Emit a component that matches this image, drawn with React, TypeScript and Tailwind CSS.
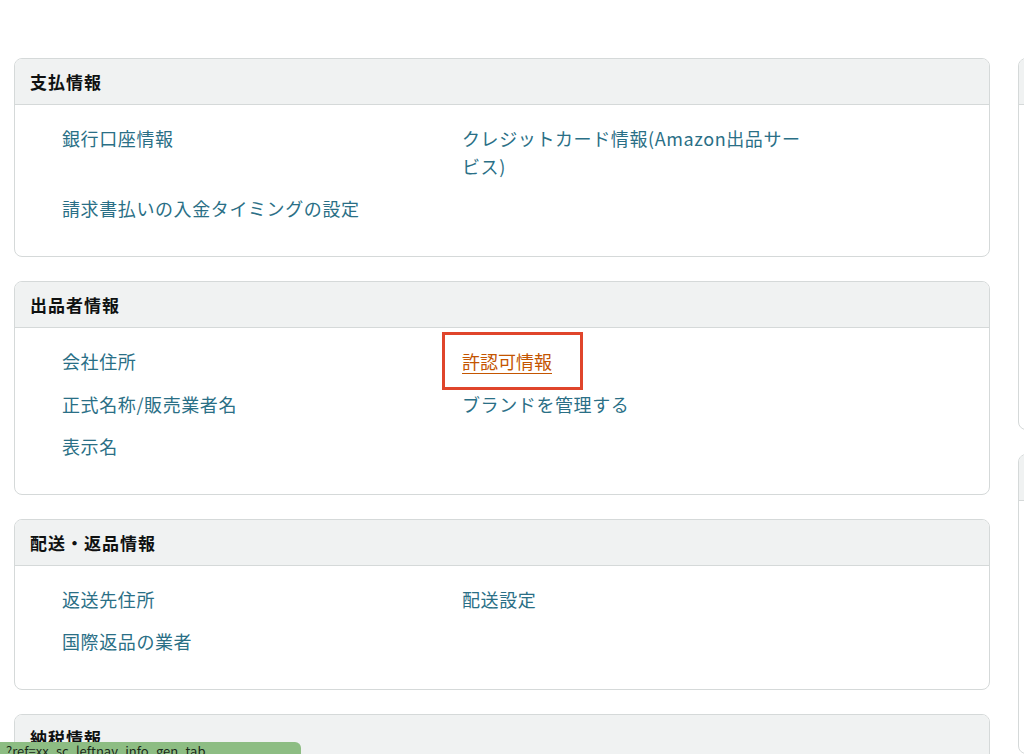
const font = { fontFamily: '"Noto Sans CJK JP", "Noto Sans", sans-serif' };

type Item = { label: string; highlight?: boolean };

const sections: { title: string; rows: [Item | null, Item | null][] }[] = [
  {
    title: "支払情報",
    rows: [
      [{ label: "銀行口座情報" }, { label: "クレジットカード情報(Amazon出品サービス)" }],
      [{ label: "請求書払いの入金タイミングの設定" }, null],
    ],
  },
  {
    title: "出品者情報",
    rows: [
      [{ label: "会社住所" }, { label: "許認可情報", highlight: true }],
      [{ label: "正式名称/販売業者名" }, { label: "ブランドを管理する" }],
      [{ label: "表示名" }, null],
    ],
  },
  {
    title: "配送・返品情報",
    rows: [
      [{ label: "返送先住所" }, { label: "配送設定" }],
      [{ label: "国際返品の業者" }, null],
    ],
  },
];

const Link = ({ item }: { item: Item | null }) => {
  if (!item) return <div />;
  return item.highlight ? (
    <div className="relative mb-[14px] leading-[28px]">
      <span className="text-[18px] text-[#c45500] underline underline-offset-4">{item.label}</span>
      <span className="absolute left-[-20px] top-[-15px] h-[58px] w-[141px] border-[3px] border-[#e0452b]" />
    </div>
  ) : (
    <div className="mb-[14px] text-[18px] leading-[28px] tracking-[0.6px] text-[#2a6f86]">{item.label}</div>
  );
};

const Card = ({ title, rows }: (typeof sections)[number]) => (
  <div className="mb-[24px] overflow-hidden rounded-[8px] border border-[#d5d9d9]">
    <div className="flex h-[46px] items-center border-b border-[#d5d9d9] bg-[#f0f2f2] px-[15px] text-[17px] font-bold tracking-[1px] text-[#0f1111]">
      {title}
    </div>
    <div className="grid grid-cols-[400px_345px] px-[47px] pb-[20px] pt-[19px]">
      {rows.map(([l, r], i) => [<Link key={`l${i}`} item={l} />, <Link key={`r${i}`} item={r} />])}
    </div>
  </div>
);

export default function App() {
  return (
    <div className="relative h-[754px] w-[1024px] overflow-hidden bg-white" style={font}>
      <div className="flex gap-[28px] pl-[14px] pt-[58px]">
        <div className="w-[976px] shrink-0">
          {sections.map((s) => (
            <Card key={s.title} {...s} />
          ))}
          <div className="overflow-hidden rounded-[8px] border border-[#d5d9d9]">
            <div className="flex h-[46px] items-center bg-[#f0f2f2] px-[15px] text-[17px] font-bold tracking-[1px] text-[#0f1111]">
              納税情報
            </div>
          </div>
        </div>
        <div className="w-[300px] shrink-0">
          <div className="h-[372px] overflow-hidden rounded-[8px] border border-[#d5d9d9]">
            <div className="h-[46px] border-b border-[#d5d9d9] bg-[#f0f2f2]" />
          </div>
          <div className="mt-[24px] h-[300px] overflow-hidden rounded-[8px] border border-[#d5d9d9]">
            <div className="h-[46px] border-b border-[#d5d9d9] bg-[#f0f2f2]" />
          </div>
        </div>
      </div>
      <div className="absolute bottom-0 left-0 h-[12px] w-[301px] overflow-hidden rounded-tr-[6px] bg-[#8dbd83] pl-[6px] text-[13px] leading-[18px] text-[#1a2a1a]">
        ?ref=xx_sc_leftnav_info_gen_tab
      </div>
    </div>
  );
}
